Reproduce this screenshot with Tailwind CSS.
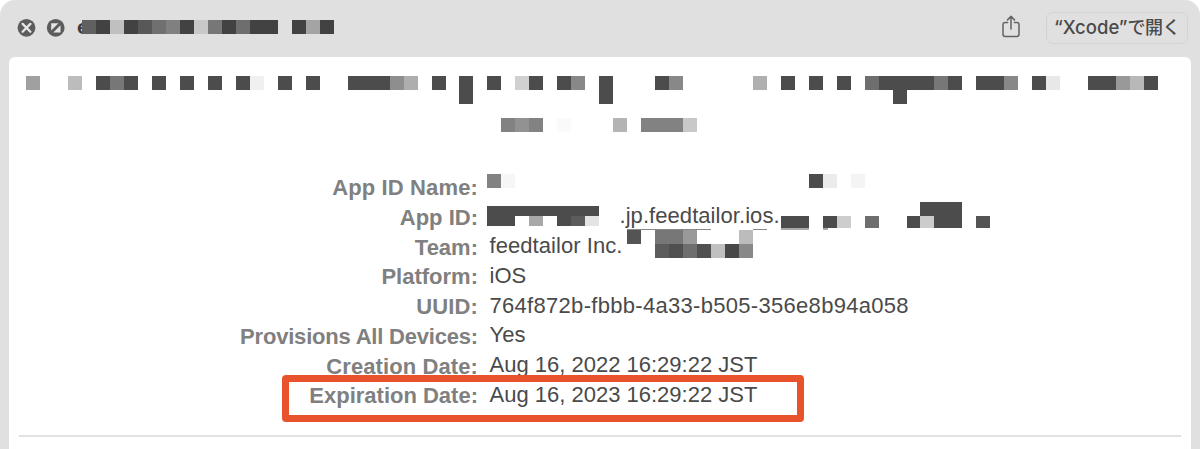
<!DOCTYPE html>
<html lang="ja">
<head>
    <meta charset="UTF-8">
    <meta name="viewport" content="width=device-width, initial-scale=1.0">
    <title>Provisioning Profile</title>
    <script src="https://cdn.jsdelivr.net/npm/@tailwindcss/browser@4"></script>
</head>
<body class="bg-white overflow-hidden">

    <div class="relative w-[1200px] h-[449px] flex flex-col bg-[#e0e0e0] rounded-t-[15px] overflow-hidden font-['Liberation_Sans',sans-serif]">

        <!-- Title bar -->
        <header class="h-[57px] shrink-0 flex items-start pl-[17px] pr-3">
            <svg class="mt-[18px] size-[19px]" viewBox="0 0 19 19">
                <circle cx="9.5" cy="9.8" r="8.900" fill="#5c5c5c"/>
                <path d="M5.6 5.9l7.8 7.8M13.4 5.9l-7.8 7.8" stroke="#e6e6e6" stroke-width="2.3" stroke-linecap="round"/>
            </svg>
            <svg class="mt-[18px] ml-[10px] size-[19px]" viewBox="0 0 19 19">
                <circle cx="9.7" cy="9.8" r="8.900" fill="#5c5c5c"/>
                <path d="M5.200 5.200h7.200l-7.200 7.200zM14.500 14.500H7.300l7.200-7.200z" fill="#e6e6e6"/>
            </svg>
            <span class="mt-[15px] ml-[12px] text-[20px] leading-6 font-bold text-[#3c3c3c] font-['Inter',sans-serif]">e</span>
            <svg class="mt-[15px] ml-auto w-[18px] h-[23px]" viewBox="0 0 18 23" fill="none" stroke="#636363" stroke-width="1.5" stroke-linecap="round" stroke-linejoin="round">
                <path d="M5.6 7.400H3.200Q1 7.400 1 9.600v9.600q0 2.200 2.200 2.200h11.600q2.200 0 2.200-2.200V9.600q0-2.200-2.200-2.200h-2.400"/>
                <path d="M9 14V1.800M5.500 4.900L9 1.400l3.500 3.500"/>
            </svg>
            <button class="mt-3 ml-[26px] w-[142px] h-8 pb-[2px] rounded-[7px] border border-[#d3d3d3] text-[18.500px] leading-[28px] font-medium text-[#4a4a4a] whitespace-nowrap font-['Inter','Noto_Sans_CJK_JP',sans-serif]">“Xcode”<span class="text-[18px] tracking-[-0.500px]">で開く</span></button>
        </header>

        <main class="mx-[9px] flex-1 bg-white rounded-t-[6px] px-[10px] pt-[116px]">
            <dl class="grid grid-cols-[459px_1fr] gap-x-[11.500px] auto-rows-[29.750px] text-[22px] leading-[29.750px] whitespace-nowrap [&_dt]:text-right [&_dt]:font-bold [&_dt]:text-[#808080] [&_dd]:-mt-[1.500px] [&_dd]:text-[#4a4a4a]">
                <dt class="tracking-[0.130px]">App ID Name:</dt><dd></dd>
                <dt>App ID:</dt><dd class="pl-[130px] tracking-[0.060px]">.jp.feedtailor.ios.</dd>
                <dt>Team:</dt><dd class="tracking-[0.060px]">feedtailor Inc.</dd>
                <dt>Platform:</dt><dd>iOS</dd>
                <dt class="tracking-[0.130px]">UUID:</dt><dd class="tracking-[0.300px]">764f872b-fbbb-4a33-b505-356e8b94a058</dd>
                <dt class="tracking-[-0.200px]">Provisions All Devices:</dt><dd>Yes</dd>
                <dt class="tracking-[0.100px]">Creation Date:</dt><dd>Aug 16, 2022 16:29:22 JST</dd>
                <dt>Expiration Date:</dt><dd>Aug 16, 2023 16:29:22 JST</dd>
            </dl>
            <hr class="mt-[24px] border-0 h-[2px] bg-[#e2e2e2]">
        </main>

        <!-- Redaction blocks -->
        <svg id="mosaic" class="absolute inset-0 w-[1200px] h-[449px]" viewBox="0 0 1200 449"></svg>

        <!-- Expiration highlight -->
        <div class="absolute left-[282px] top-[375px] w-[522px] h-[47px] border-[7px] border-[#e8522c] rounded-[4px]"></div>
    </div>

    <script>
        const D = "#4c4c4c";
        const T = "#424242";
        // y, height, [column, span, color]
        const rows = [
            [20.3, 14, [[4,1,"#606060"],[5,1,T],[6,1,"#c0c0c0"],[7,1,T],[8,1,"#585858"],[9,1,"#707070"],[10,1,"#808080"],[11,1,T],[12,1,"#c8c8c8"],[13,1,"#777777"],[14,1,T],[15,1,"#6e6e6e"],[16,2,T],[19,1,T],[20,1,"#a4a4a4"],[21,1,T]]],
            [76.3, 14, [[0,1,"#a0a0a0"],[3,1,"#bcbcbc"],[5,1,D],[6,1,"#777777"],[7,1,D],[9,1,D],[11,1,D],[13,1,D],[15,1,D],[16,1,"#f0f0f0"],[18,1,D],[20,1,D],[23,3,D],[26,1,"#8e8e8e"],[27,1,"#aeaeae"],[29,1,D],[33,1,D],[35,1,"#d0d0d0"],[36,1,D],[38,1,D],[39,1,"#888888"],[45,1,D],[46,1,"#888888"],[52,1,"#b0b0b0"],[54,1,D],[56,1,D],[58,1,D],[60,1,"#6e6e6e"],[61,4,D],[65,1,"#777777"],[66,1,D],[68,2,D],[70,1,"#888888"],[72,1,D],[73,1,"#e8e8e8"],[76,2,D],[78,1,"#999999"],[79,1,"#b8b8b8"],[80,1,D]]],
            [76.3, 27.9, [[31,1,D],[41,1,D],[62,1,D]]],
            [118.2, 14, [[34,1,"#828282"],[35,1,"#929292"],[36,1,"#828282"],[38,1,"#fafafa"],[42,1,"#b4b4b4"],[44,3,"#828282"],[47,1,"#c8c8c8"]]],
            [174, 14, [[33,1,"#828282"],[34,1,"#f6f6f6"],[56,1,D],[57,1,"#ebebeb"],[59,1,"#f4f4f4"]]],
            [202, 26.3, [[64,3,D]]],
            [206.3, 9.8, [[33,8,D]]],
            [216, 9.5, [[33,2,D],[36,1,"#a8a8a8"],[38,1,D],[39,1,"#5c5c5c"],[40,1,"#e4e4e4"]]],
            [216, 12.3, [[54,2,D],[57,1,D],[58,1,"#cdcdcd"],[60,1,"#6e6e6e"],[63,1,D],[64,1,"#cccccc"],[68,1,"#545454"]]],
            [228.3, 1.2, [[54,2,"#a8a8a8"],[57,0.35,"#a8a8a8"]]],
            [229, 1, [[43,6,"#888888"],[52,1,"#888888"]]],
            [230, 14, [[43,1,"#545454"],[45,2,"#777777"],[47,1,"#999999"],[51,1,"#bcbcbc"]]],
            [244, 14, [[45,1,"#5c5c5c"],[46,1,"#505050"],[47,1,"#6e6e6e"],[48,1,"#505050"],[49,1,"#c0c0c0"],[50,1,"#484848"],[51,1,"#888888"]]],
        ];
        const step = 13.97;
        let out = "";
        rows.forEach(([y, h, cells]) => {
            cells.forEach(([col, span, color]) => {
                out += `<rect x="${26.4 + col * step}" y="${y}" width="${span * step}" height="${h}" fill="${color}" shape-rendering="crispEdges"/>`;
            });
        });
        document.getElementById("mosaic").innerHTML = out;
    </script>

</body>
</html>
